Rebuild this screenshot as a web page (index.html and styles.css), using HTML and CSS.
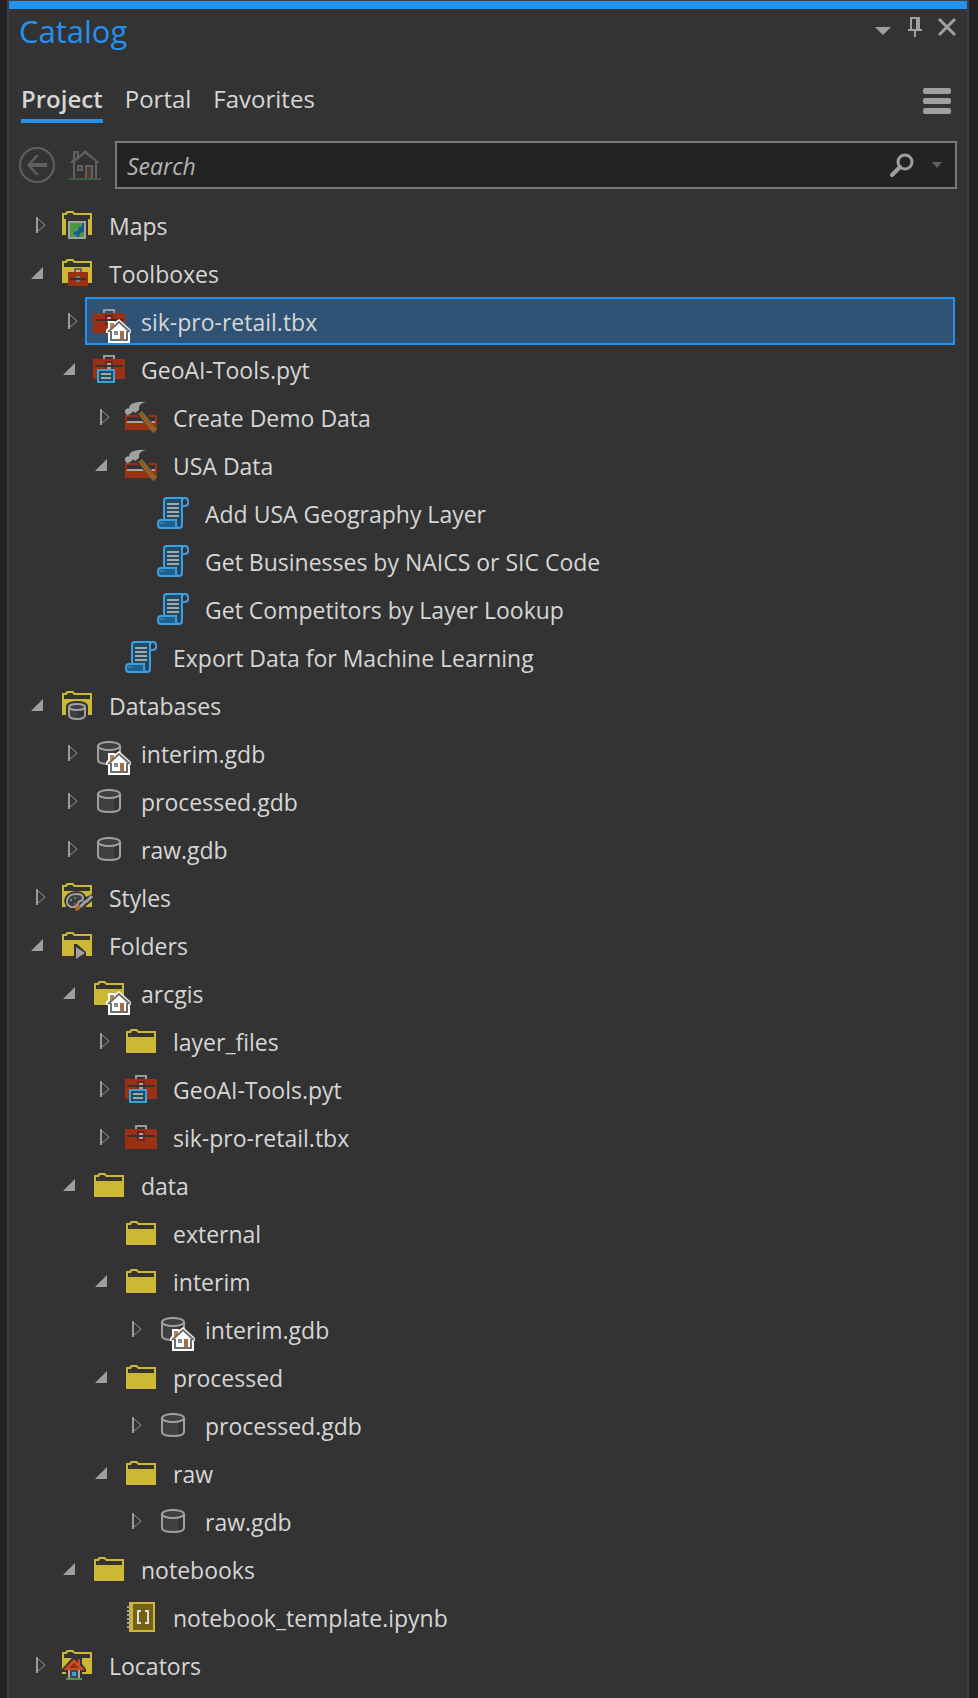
FILE: index.html
```html
<!DOCTYPE html>
<html lang="en">
<head>
<meta charset="utf-8">
<meta name="viewport" content="width=device-width, initial-scale=1">
<title>Catalog</title>
<link rel="stylesheet" href="styles.css">
</head>
<body>
<svg class="sprite" aria-hidden="true">
  <defs>
    <symbol id="folder-shape" viewBox="0 0 32 32">
      <path fill="#cdb835" d="M1 4h3l2-2h6l2 2h17v22H1z"/>
      <path fill="#333" d="M3 6h3l1-2h4l2 2h16v4H3z"/>
    </symbol>
    <symbol id="folder" viewBox="0 0 32 32"><use href="#folder-shape" y="2" width="32" height="32"/></symbol>
    <symbol id="home-badge" viewBox="0 0 40 40">
      <path fill="#fff" d="M15 16h7v1l4-3 12 11v3h-1v10H15V28h-2v-3l2-2z"/>
      <path fill="#b5824a" d="M17 18h4v3l-4 3z"/>
      <path fill="none" stroke="#6e6e6e" stroke-width="2" d="M15 27l11-10 11 10M18 26v9h16v-9"/>
      <path fill="#8a8a8a" d="M21 26h4v4h-4z"/>
      <path fill="#a06f3c" d="M27 26h4v8h-4z"/>
    </symbol>
    <symbol id="tbx-shape" viewBox="0 0 32 32">
      <path fill="#9a9a9a" d="M10 2h12v4h-2V4h-8v2h-2z"/>
      <path fill="#9c3014" d="M0 6h32v20H0z"/>
      <path fill="#6b231b" d="M12 8h8v10h-8z"/>
      <path fill="#333" d="M2 12h28v2H2z"/>
      <path fill="#a6a6a6" d="M14 10h4v2h-4zM14 14h4v2h-4z"/>
    </symbol>
    <symbol id="tbx" viewBox="0 0 32 32"><use href="#tbx-shape" y="2" width="32" height="32"/></symbol>
    <symbol id="pyt" viewBox="0 0 32 32">
      <use href="#tbx-shape" width="32" height="32"/>
      <path fill="#1f4a66" stroke="#3f9fdd" stroke-width="2" d="M5 17h16v12H5z"/>
      <path fill="#a6a6a6" d="M8 20h10v2H8zM8 24h10v2H8z"/>
    </symbol>
    <symbol id="toolset" viewBox="0 0 32 32">
      <path fill="#9c3014" d="M0 14h32v15H0z"/>
      <path fill="#333" d="M2 16h28v4H2z"/>
      <path fill="#a6a6a6" d="M2 20h28v2H2z"/>
      <path fill="#333" d="M12 14l1-2 4-3 6 5 4 6-1 2h-7z"/>
      <path fill="#8f5f28" d="M13 13l4-3 15 18-3 4-2-1z"/>
      <path fill="#a0a0a0" d="M0 9l3-2 1 1q0-5 5-6 6-2 12-1-6 1-7 5v3l-4 3q-1-2-3-1l-1 2H4l-1 2-3-3z"/>
    </symbol>
    <symbol id="script" viewBox="0 0 32 32">
      <path fill="#1f4a68" stroke="#3f9fdd" stroke-width="2" d="M7 23V4q0-3 3-3h18q-3 0-3 3v24q0 3-3 3H9z"/>
      <path fill="#333" stroke="#3f9fdd" stroke-width="2" d="M25 9V4q0-3 3-3t3 3v2q0 3-3 3z"/>
      <path fill="#1f5f92" stroke="#3f9fdd" stroke-width="2" d="M21 31H4q-3 0-3-3v-2q0-3 3-3h15v5q0 3 3 3"/>
      <path fill="none" stroke="#3f9fdd" stroke-width="1" d="M3 26h4"/>
      <path fill="#a6a6a6" d="M10 6h12v2H10zM10 10h12v2H10zM10 14h12v2H10zM10 18h12v2H10z"/>
    </symbol>
    <symbol id="gdb" viewBox="0 0 32 32">
      <path fill="#404040" d="M5 9h22v15q-4 3-11 3T5 24z"/>
      <path fill="#343434" d="M21 12l6-2v14l-6 2z"/>
      <path fill="none" stroke="#a0a0a0" stroke-width="2" d="M5 9v14q0 4 11 4t11-4V9"/>
      <ellipse cx="16" cy="9" rx="11" ry="4" fill="#404040" stroke="#a0a0a0" stroke-width="2"/>
    </symbol>
    <symbol id="maps" viewBox="0 0 32 32">
      <use href="#folder-shape" width="32" height="32"/>
      <path fill="#333" d="M5 10h22v16H5z"/>
      <path fill="#4b9648" stroke="#a3a3a3" stroke-width="2" d="M8 13h16v16H8z"/>
      <path fill="#1b5a8e" d="M23 14v9l-4 1-1 4h-3l1-3-3 1v-3l4-1 1-4 3-1v-3z"/>
    </symbol>
    <symbol id="toolboxes" viewBox="0 0 32 32">
      <use href="#folder-shape" width="32" height="32"/>
      <path fill="#666" d="M13 11h8v4h-2v-2h-4v2h-2z"/>
      <path fill="#9c3014" d="M7 15h20v14H7z"/>
      <path fill="#333" d="M9 21h16v2H9z"/>
      <path fill="#777" d="M15 19h4v2h-4zM15 23h4v2h-4z"/>
    </symbol>
    <symbol id="databases" viewBox="0 0 32 32">
      <use href="#folder-shape" width="32" height="32"/>
      <path fill="#333" d="M5 26V17q1-5 11-5t11 5v9z"/>
      <path fill="#404040" stroke="#a0a0a0" stroke-width="2" d="M8 18v8q0 4 8 4t8-4v-8"/>
      <path fill="#343434" d="M17 21h6v6l-6 2z"/>
      <ellipse cx="16" cy="18" rx="8" ry="3" fill="#404040" stroke="#a0a0a0" stroke-width="2"/>
    </symbol>
    <symbol id="styles" viewBox="0 0 32 32">
      <use href="#folder-shape" width="32" height="32"/>
      <path fill="#333" d="M3 20q1-9 12-10 8 0 10 6l6-3v7l-7 6H5z"/>
      <path fill="#3e3e3e" stroke="#a0a0a0" stroke-width="2" d="M14 26H10q-5-2-4-7 2-6 9-6 7 0 7 4 0 3-3 3-2 1-2 3z"/>
      <path fill="#3f9fdd" d="M9 18h2v2H9z"/><path fill="#4b9648" d="M13 16h2v2h-2z"/><path fill="#c8471f" d="M13 22h2v2h-2z"/>
      <path stroke="#a0a0a0" stroke-width="3" d="M19 26l6-6M25 21l6-6"/>
      <path fill="#b06c2c" d="M15 25l3-1 2 2-2 3-4 1z"/>
    </symbol>
    <symbol id="folders" viewBox="0 0 32 32">
      <use href="#folder-shape" y="1" width="32" height="32"/>
      <path fill="#333" d="M13 27V15h3l9 8v4z"/>
      <path fill="#a0a0a0" d="M15 18l9 6-9 6z"/>
    </symbol>
    <symbol id="notebook" viewBox="0 0 32 32">
      <path fill="#cdb835" d="M4 1h26v30H4z"/>
      <path fill="#736216" d="M8 3h20v26H8z"/>
      <path fill="#e0e0e0" d="M12 9h4v2h-2v10h2v2h-4zM20 9h4v14h-4v-2h2V11h-2z"/>
      <path fill="#a0a0a0" d="M2 5h4v2H2zM2 9h4v2H2zM2 13h4v2H2zM2 17h4v2H2zM2 21h4v2H2zM2 25h4v2H2z"/>
    </symbol>
    <symbol id="locators" viewBox="0 0 32 32">
      <use href="#folder-shape" y="-1" width="32" height="32"/>
      <path fill="#333" d="M5 7l2-3h6l2 3zM1 20l9-10 3-3 4 2h4v6l4 5v3h-4v3H5v-3H1z"/>
      <path fill="#d04a22" d="M13 10l4 4v-4h2v6l5 5H2z"/>
      <path fill="#8c2d14" d="M13 14l5 5H8z"/>
      <path fill="#444" d="M9 21h8v8H9z"/>
      <path fill="#a6a6a6" d="M7 21h2v8H7zM17 21h2v8h-2z"/>
      <path fill="#3f9fdd" d="M11 23h4v4h-4z"/>
      <path fill="#4b9648" d="M5 29h16v2H5z"/>
    </symbol>
    <symbol id="closed" viewBox="0 0 16 16">
      <path fill="none" stroke="#9a9a9a" d="M5 1l8 7-8 7z"/>
      <path fill="#9a9a9a" d="M4 0h2v16H4z"/>
    </symbol>
    <symbol id="open" viewBox="0 0 16 16"><path fill="#9f9f9f" d="M11 2v12H-1z"/></symbol>
  </defs>
</svg>

<main class="panel">
  <header class="titlebar">
    <h1 class="title">Catalog</h1>
    <div class="window-buttons">
      <button class="icon-button" type="button" aria-label="Window options"><svg width="16" height="20" viewBox="0 0 16 20"><path fill="#a0a0a0" d="M0 10h16l-8 8z"/></svg></button>
      <button class="icon-button" type="button" aria-label="Auto hide"><svg width="14" height="20" viewBox="0 0 14 20"><path fill="#a0a0a0" d="M2 0h10v12h2v2H8v6H6v-6H0v-2h2zM4 2v10h4V2z" fill-rule="evenodd"/></svg></button>
      <button class="icon-button" type="button" aria-label="Close"><svg width="16" height="20" viewBox="0 0 16 20"><path fill="none" stroke="#a0a0a0" stroke-width="3" d="M0 2l16 16M16 2L0 18"/></svg></button>
    </div>
  </header>

  <div class="tabbar">
    <nav class="tabs">
      <a class="tab tab-active" href="#project" aria-current="page">Project</a>
      <a class="tab" href="#portal">Portal</a>
      <a class="tab" href="#favorites">Favorites</a>
    </nav>
    <button class="icon-button" type="button" aria-label="Menu"><svg width="28" height="26" viewBox="0 0 28 26" fill="#a0a0a0"><rect width="28" height="6" rx="2"/><rect y="10" width="28" height="6" rx="2"/><rect y="20" width="28" height="6" rx="2"/></svg></button>
  </div>

  <div class="toolbar">
    <button class="icon-button" type="button" aria-label="Back"><svg width="36" height="36" viewBox="0 0 36 36"><circle cx="18" cy="18" r="17" fill="none" stroke="#606060" stroke-width="2"/><path fill="#606060" d="M8 18l9-10h3l-7 8h15v4H13l7 8h-3z"/></svg></button>
    <button class="icon-button" type="button" aria-label="Home"><svg width="32" height="30" viewBox="0 0 32 30"><path fill="#606060" d="M4 1h6v5l6-6 15 13h-3v15h-2V11L16 4 6 12v16H4V13H1l3-4z"/><path fill="#333" d="M6 12l10-8 10 8v16H6z"/><path fill="#4a3a2c" d="M6 3h2v5H6z"/><path fill="#606060" d="M8 15h6v6H8zM16 15h8v13h-8z"/><path fill="#22455f" d="M10 17h2v2h-2z"/><path fill="#4b3d2e" d="M18 17h4v11h-4z"/><path fill="#3d5f3d" d="M0 28h32v2H0z"/></svg></button>
    <form class="search" role="search">
      <input class="search-input" type="search" placeholder="Search" aria-label="Search">
      <button class="icon-button" type="button" aria-label="Run search"><svg width="24" height="24" viewBox="0 0 24 24"><circle cx="15" cy="9" r="7" fill="none" stroke="#9f9f9f" stroke-width="3"/><path stroke="#9f9f9f" stroke-width="4" stroke-linecap="round" d="M10 14l-8 8"/></svg></button>
      <button class="icon-button" type="button" aria-label="Search options"><svg width="10" height="6" viewBox="0 0 10 6"><path fill="#606060" d="M0 0h10L5 6z"/></svg></button>
    </form>
  </div>

  <ul class="tree">
    <li><div class="row"><button class="twisty" type="button" aria-label="Expand Maps"><svg class="arrow"><use href="#closed"/></svg></button><div class="item"><svg class="icon"><use href="#maps"/></svg><span class="label">Maps</span></div></div></li>
    <li><div class="row"><button class="twisty" type="button" aria-label="Collapse Toolboxes"><svg class="arrow"><use href="#open"/></svg></button><div class="item"><svg class="icon"><use href="#toolboxes"/></svg><span class="label">Toolboxes</span></div></div>
      <ul>
        <li><div class="row"><button class="twisty" type="button" aria-label="Expand sik-pro-retail.tbx"><svg class="arrow"><use href="#closed"/></svg></button><div class="item item-selected"><svg class="icon"><use href="#tbx"/><use href="#home-badge" width="40" height="40"/></svg><span class="label">sik-pro-retail.tbx</span></div></div></li>
        <li><div class="row"><button class="twisty" type="button" aria-label="Collapse GeoAI-Tools.pyt"><svg class="arrow"><use href="#open"/></svg></button><div class="item"><svg class="icon"><use href="#pyt"/></svg><span class="label">GeoAI-Tools.pyt</span></div></div>
          <ul>
            <li><div class="row"><button class="twisty" type="button" aria-label="Expand Create Demo Data"><svg class="arrow"><use href="#closed"/></svg></button><div class="item"><svg class="icon"><use href="#toolset"/></svg><span class="label">Create Demo Data</span></div></div></li>
            <li><div class="row"><button class="twisty" type="button" aria-label="Collapse USA Data"><svg class="arrow"><use href="#open"/></svg></button><div class="item"><svg class="icon"><use href="#toolset"/></svg><span class="label">USA Data</span></div></div>
              <ul>
                <li><div class="row"><span class="twisty"></span><div class="item"><svg class="icon"><use href="#script"/></svg><span class="label">Add USA Geography Layer</span></div></div></li>
                <li><div class="row"><span class="twisty"></span><div class="item"><svg class="icon"><use href="#script"/></svg><span class="label">Get Businesses by NAICS or SIC Code</span></div></div></li>
                <li><div class="row"><span class="twisty"></span><div class="item"><svg class="icon"><use href="#script"/></svg><span class="label">Get Competitors by Layer Lookup</span></div></div></li>
              </ul>
            </li>
            <li><div class="row"><span class="twisty"></span><div class="item"><svg class="icon"><use href="#script"/></svg><span class="label">Export Data for Machine Learning</span></div></div></li>
          </ul>
        </li>
      </ul>
    </li>
    <li><div class="row"><button class="twisty" type="button" aria-label="Collapse Databases"><svg class="arrow"><use href="#open"/></svg></button><div class="item"><svg class="icon"><use href="#databases"/></svg><span class="label">Databases</span></div></div>
      <ul>
        <li><div class="row"><button class="twisty" type="button" aria-label="Expand interim.gdb"><svg class="arrow"><use href="#closed"/></svg></button><div class="item"><svg class="icon"><use href="#gdb"/><use href="#home-badge" width="40" height="40"/></svg><span class="label">interim.gdb</span></div></div></li>
        <li><div class="row"><button class="twisty" type="button" aria-label="Expand processed.gdb"><svg class="arrow"><use href="#closed"/></svg></button><div class="item"><svg class="icon"><use href="#gdb"/></svg><span class="label">processed.gdb</span></div></div></li>
        <li><div class="row"><button class="twisty" type="button" aria-label="Expand raw.gdb"><svg class="arrow"><use href="#closed"/></svg></button><div class="item"><svg class="icon"><use href="#gdb"/></svg><span class="label">raw.gdb</span></div></div></li>
      </ul>
    </li>
    <li><div class="row"><button class="twisty" type="button" aria-label="Expand Styles"><svg class="arrow"><use href="#closed"/></svg></button><div class="item"><svg class="icon"><use href="#styles"/></svg><span class="label">Styles</span></div></div></li>
    <li><div class="row"><button class="twisty" type="button" aria-label="Collapse Folders"><svg class="arrow"><use href="#open"/></svg></button><div class="item"><svg class="icon"><use href="#folders"/></svg><span class="label">Folders</span></div></div>
      <ul>
        <li><div class="row"><button class="twisty" type="button" aria-label="Collapse arcgis"><svg class="arrow"><use href="#open"/></svg></button><div class="item"><svg class="icon"><use href="#folder"/><use href="#home-badge" width="40" height="40"/></svg><span class="label">arcgis</span></div></div>
          <ul>
            <li><div class="row"><button class="twisty" type="button" aria-label="Expand layer_files"><svg class="arrow"><use href="#closed"/></svg></button><div class="item"><svg class="icon"><use href="#folder"/></svg><span class="label">layer_files</span></div></div></li>
            <li><div class="row"><button class="twisty" type="button" aria-label="Expand GeoAI-Tools.pyt"><svg class="arrow"><use href="#closed"/></svg></button><div class="item"><svg class="icon"><use href="#pyt"/></svg><span class="label">GeoAI-Tools.pyt</span></div></div></li>
            <li><div class="row"><button class="twisty" type="button" aria-label="Expand sik-pro-retail.tbx"><svg class="arrow"><use href="#closed"/></svg></button><div class="item"><svg class="icon"><use href="#tbx"/></svg><span class="label">sik-pro-retail.tbx</span></div></div></li>
          </ul>
        </li>
        <li><div class="row"><button class="twisty" type="button" aria-label="Collapse data"><svg class="arrow"><use href="#open"/></svg></button><div class="item"><svg class="icon"><use href="#folder"/></svg><span class="label">data</span></div></div>
          <ul>
            <li><div class="row"><span class="twisty"></span><div class="item"><svg class="icon"><use href="#folder"/></svg><span class="label">external</span></div></div></li>
            <li><div class="row"><button class="twisty" type="button" aria-label="Collapse interim"><svg class="arrow"><use href="#open"/></svg></button><div class="item"><svg class="icon"><use href="#folder"/></svg><span class="label">interim</span></div></div>
              <ul>
                <li><div class="row"><button class="twisty" type="button" aria-label="Expand interim.gdb"><svg class="arrow"><use href="#closed"/></svg></button><div class="item"><svg class="icon"><use href="#gdb"/><use href="#home-badge" width="40" height="40"/></svg><span class="label">interim.gdb</span></div></div></li>
              </ul>
            </li>
            <li><div class="row"><button class="twisty" type="button" aria-label="Collapse processed"><svg class="arrow"><use href="#open"/></svg></button><div class="item"><svg class="icon"><use href="#folder"/></svg><span class="label">processed</span></div></div>
              <ul>
                <li><div class="row"><button class="twisty" type="button" aria-label="Expand processed.gdb"><svg class="arrow"><use href="#closed"/></svg></button><div class="item"><svg class="icon"><use href="#gdb"/></svg><span class="label">processed.gdb</span></div></div></li>
              </ul>
            </li>
            <li><div class="row"><button class="twisty" type="button" aria-label="Collapse raw"><svg class="arrow"><use href="#open"/></svg></button><div class="item"><svg class="icon"><use href="#folder"/></svg><span class="label">raw</span></div></div>
              <ul>
                <li><div class="row"><button class="twisty" type="button" aria-label="Expand raw.gdb"><svg class="arrow"><use href="#closed"/></svg></button><div class="item"><svg class="icon"><use href="#gdb"/></svg><span class="label">raw.gdb</span></div></div></li>
              </ul>
            </li>
          </ul>
        </li>
        <li><div class="row"><button class="twisty" type="button" aria-label="Collapse notebooks"><svg class="arrow"><use href="#open"/></svg></button><div class="item"><svg class="icon"><use href="#folder"/></svg><span class="label">notebooks</span></div></div>
          <ul>
            <li><div class="row"><span class="twisty"></span><div class="item"><svg class="icon"><use href="#notebook"/></svg><span class="label">notebook_template.ipynb</span></div></div></li>
          </ul>
        </li>
      </ul>
    </li>
    <li><div class="row"><button class="twisty" type="button" aria-label="Expand Locators"><svg class="arrow"><use href="#closed"/></svg></button><div class="item"><svg class="icon"><use href="#locators"/></svg><span class="label">Locators</span></div></div></li>
  </ul>
</main>
</body>
</html>
```
FILE: styles.css
```css
* {
  box-sizing: border-box;
}

body {
  margin: 0;
  background: #232323;
  color: #d6d6d6;
  font: 23px/32px "Open Sans", "Noto Sans", sans-serif;
}

.sprite {
  position: absolute;
  width: 0;
  height: 0;
}

.panel {
  min-height: 100vh;
  margin: 0 9px 0 7px;
  border: solid #3f3f46;
  border-width: 1px 2px 0;
  background: #333;
}

.icon-button {
  display: flex;
  padding: 0;
  border: 0;
  background: none;
}

.icon-button svg {
  overflow: visible;
}

.titlebar {
  display: flex;
  justify-content: space-between;
  align-items: flex-start;
  padding: 2px 12px 0 10px;
  border-top: 8px solid #2490f0;
}

.title {
  margin: 0;
  color: #2490f0;
  font-size: 31px;
  font-weight: 400;
  line-height: 40px;
}

.window-buttons {
  display: flex;
  gap: 17px;
  padding-top: 6px;
}

.tabbar {
  display: flex;
  justify-content: space-between;
  align-items: center;
  padding: 28px 16px 0 12px;
}

.tabs {
  display: flex;
  gap: 22px;
}

.tab {
  padding: 4px 0;
  border-bottom: 4px solid transparent;
  color: inherit;
  font-size: 24px;
  text-decoration: none;
}

.tab-active {
  border-color: #2490f0;
  font-weight: 600;
}

.toolbar {
  display: flex;
  align-items: center;
  gap: 14px;
  padding: 18px 10px 12px;
}

.search {
  display: flex;
  flex: 1;
  align-items: center;
  gap: 18px;
  height: 48px;
  padding: 0 13px 0 10px;
  border: 2px solid #7a7a7a;
  background: #232323;
}

.search-input {
  flex: 1;
  min-width: 0;
  padding: 2px 0 0;
  border: 0;
  outline: 0;
  background: none;
  color: #d6d6d6;
  font: inherit;
}

.search-input::placeholder {
  color: #b4b4b4;
  font-style: italic;
  opacity: 1;
}

.tree,
.tree ul {
  margin: 0;
  padding: 0;
  list-style: none;
}

.tree {
  padding: 0 12px 8px 20px;
}

.tree ul {
  padding-left: 32px;
}

.row {
  display: flex;
  height: 48px;
}

.twisty {
  display: flex;
  flex: none;
  align-items: center;
  width: 24px;
  padding: 0 0 0 3px;
  border: 0;
  background: none;
}

.arrow {
  width: 16px;
  height: 16px;
  overflow: visible;
}

#open {
  overflow: visible;
}

.item {
  display: flex;
  flex: 1;
  align-items: center;
  gap: 16px;
  min-width: 0;
  padding: 0 6px;
  border: 2px solid transparent;
  white-space: nowrap;
}

.item-selected {
  border-color: #2490f0;
  background: #305274;
}

.icon {
  flex: none;
  width: 32px;
  height: 32px;
  overflow: visible;
}

.label {
  padding-top: 2px;
}
```
